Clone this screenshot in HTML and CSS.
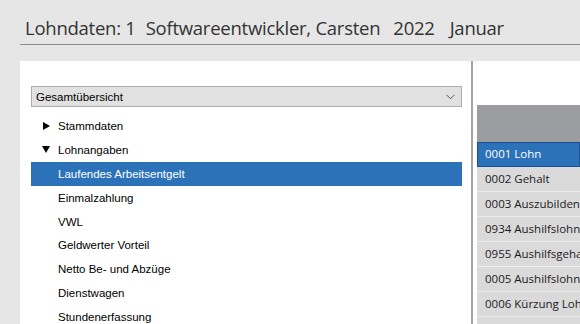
FILE: index.html
```html
<!DOCTYPE html>
<html lang="de">
<head>
    <meta charset="UTF-8">
    <title>Lohndaten</title>
    <link rel="stylesheet" href="styles.css">
</head>
<body>
    <div class="title-bar">
        <h1>
            <span>Lohndaten: 1</span>
            <span class="gap-s">Softwareentwickler, Carsten</span>
            <span class="gap-m">2022</span>
            <span class="gap-l">Januar</span>
        </h1>
    </div>

    <div class="main">
        <div class="nav-panel">
            <div class="select">
                <span>Gesamtübersicht</span>
                <svg class="chevron" width="9" height="6" viewBox="0 0 9 6">
                    <path d="M0.5 0.8 L4.5 4.8 L8.5 0.8" fill="none" stroke="#555" stroke-width="1"/>
                </svg>
            </div>

            <ul class="tree">
                <li class="node"><span class="arrow arrow-right"></span>Stammdaten</li>
                <li class="node"><span class="arrow arrow-down"></span>Lohnangaben</li>
                <li class="child selected">Laufendes Arbeitsentgelt</li>
                <li class="child">Einmalzahlung</li>
                <li class="child">VWL</li>
                <li class="child">Geldwerter Vorteil</li>
                <li class="child">Netto Be- und Abzüge</li>
                <li class="child">Dienstwagen</li>
                <li class="child">Stundenerfassung</li>
            </ul>
        </div>

        <div class="splitter"></div>

        <div class="list-panel">
            <div class="list-header"></div>
            <div class="list-row active">0001 Lohn</div>
            <div class="list-row">0002 Gehalt</div>
            <div class="list-row">0003 Auszubildende</div>
            <div class="list-row">0934 Aushilfslohn</div>
            <div class="list-row">0955 Aushilfsgehalt</div>
            <div class="list-row">0005 Aushilfslohn</div>
            <div class="list-row">0006 Kürzung Lohn</div>
            <div class="list-row"></div>
        </div>
    </div>
</body>
</html>
```

FILE: styles.css
```css
* {
    margin: 0;
    padding: 0;
    box-sizing: border-box;
}

body {
    background: #e6e6e6;
    font-family: "Liberation Sans", Arial, sans-serif;
    height: 324px;
    overflow: hidden;
}

/* Page title */
.title-bar {
    padding-left: 20px;
}

.title-bar h1 {
    display: flex;
    height: 45px;
    padding: 15px 0 0 5px;
    border-bottom: 1px solid #8c8c8c;
    font-family: "Open Sans", sans-serif;
    font-weight: 400;
    font-size: 18.5px;
    line-height: 25px;
    color: #333;
    white-space: nowrap;
    letter-spacing: -0.25px;
}

.gap-s {
    margin-left: 10px;
}

.gap-m {
    margin-left: 13px;
}

.gap-l {
    margin-left: 15px;
}

.main {
    display: flex;
    margin: 16px 0 0 20px;
    height: 263px;
    overflow: hidden;
}

/* Left navigation */
.nav-panel {
    flex: 0 0 451px;
    background: #fff;
    padding: 25px 9px 0 11px;
    overflow: hidden;
}

.select {
    display: flex;
    align-items: center;
    justify-content: space-between;
    height: 21px;
    padding: 0 6px 0 4px;
    background: #e1e1e1;
    border: 1px solid #adadad;
    font-size: 11.5px;
    color: #000;
}

.chevron {
    display: block;
}

.tree {
    list-style: none;
    margin-top: 7px;
    font-size: 11.5px;
    color: #000;
}

.tree li {
    display: flex;
    align-items: center;
    height: 23.9px;
    padding-left: 27px;
}

.tree .node {
    padding-left: 11px;
}

.tree .selected {
    background: #2b72b9;
    color: #fff;
}

.arrow {
    display: inline-block;
    width: 0;
    height: 0;
}

.arrow-right {
    border-top: 4.5px solid transparent;
    border-bottom: 4.5px solid transparent;
    border-left: 7px solid #000;
    margin-left: 1px;
    margin-right: 8px;
}

.arrow-down {
    border-left: 4px solid transparent;
    border-right: 4px solid transparent;
    border-top: 7px solid #000;
    margin-right: 8px;
}

.splitter {
    flex: 0 0 2px;
    background: #a3a3a3;
}

/* Right list */
.list-panel {
    flex: 1;
    min-width: 0;
    background: #fff;
    padding: 44px 0 0 4px;
    overflow: hidden;
}

.list-header {
    height: 37px;
    background: #9b9ca0;
}

.list-row {
    height: 25px;
    padding: 4px 0 0 8px;
    background: #dadada;
    border-bottom: 1px solid #ededed;
    font-family: "Open Sans", sans-serif;
    font-size: 11.5px;
    line-height: 16px;
    color: #1a1a1a;
    white-space: nowrap;
    overflow: hidden;
}

.list-row.active {
    background: #2b72b9;
    border: 1px solid #1d4f97;
    padding-left: 7px;
    padding-top: 3px;
    color: #fff;
}
```
